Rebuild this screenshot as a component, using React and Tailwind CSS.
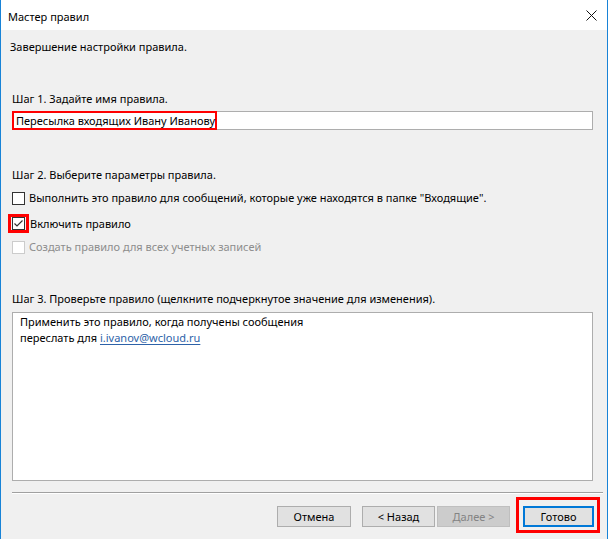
import React from 'react';

const font = { fontFamily: '"Noto Sans", "Liberation Sans", sans-serif' };

const Check = ({ checked, disabled }) => (
  <span
    className={`flex h-[13px] w-[13px] shrink-0 items-center justify-center border bg-white ${
      disabled ? 'border-[#cccccc]' : 'border-[#333333]'
    }`}
  >
    {checked && (
      <svg width="11" height="11" viewBox="0 0 11 11">
        <path d="M1.5 5.5 L4 8 L9.5 2.5" fill="none" stroke="#333" strokeWidth="1.2" />
      </svg>
    )}
  </span>
);

const Button = ({ children, disabled, primary, className = '' }) => (
  <button
    type="button"
    className={`flex h-[21px] items-center justify-center text-[11px] leading-none ${className} ${
      disabled
        ? 'border border-[#bfbfbf] bg-[#cccccc] text-[#838383]'
        : primary
        ? 'border-2 border-[#0078d7] bg-[#e1e1e1] text-black'
        : 'border border-[#adadad] bg-[#e1e1e1] text-black'
    }`}
  >
    {children}
  </button>
);

export default function App() {
  return (
    <div
      className="flex h-[539px] w-[608px] flex-col overflow-hidden border-x border-[#1883d7] bg-[#f0f0f0] text-[11px] text-black"
      style={font}
    >
      <div className="flex h-[30px] shrink-0 items-center justify-between bg-white pl-[7px] pr-[10px] pt-[4px]">
        <span className="text-[11px] leading-[16px]">Мастер правил</span>
        <svg width="11" height="11" viewBox="0 0 11 11" className="mb-[4px]">
          <path d="M0.5 0.5 L10.5 10.5 M10.5 0.5 L0.5 10.5" stroke="#111" strokeWidth="1" />
        </svg>
      </div>

      <div className="flex flex-col pl-[11px] pr-[13px]">
        <div className="ml-[-2px] mt-[9px] leading-[16px]">Завершение настройки правила.</div>

        <div className="mt-[36px] leading-[16px]">Шаг 1. Задайте имя правила.</div>
        <div className="mr-[1px] mt-[4px] flex h-[19px] items-center border border-[#adadad] bg-white">
          <span className="ml-[-1px] flex h-[19px] items-center border-2 border-[#ff0000] pl-[2px] pr-0 leading-none">
            Пересылка входящих Ивану Иванову
          </span>
        </div>

        <div className="mt-[37px] leading-[16px]">Шаг 2. Выберите параметры правила.</div>
        <div className="mt-[7px] flex items-center gap-[4px] leading-[16px]">
          <Check />
          <span>Выполнить это правило для сообщений, которые уже находятся в папке "Входящие".</span>
        </div>
        <div className="mt-[8px] flex items-center leading-[16px]">
          <span className="ml-[-4px] mr-[1px] flex h-[19px] w-[21px] items-center justify-center border-[3px] border-[#ff0000]">
            <Check checked />
          </span>
          <span>Включить правило</span>
        </div>
        <div className="mt-[6px] flex items-center gap-[4px] leading-[16px] text-[#8d8d8d]">
          <Check disabled />
          <span>Создать правило для всех учетных записей</span>
        </div>

        <div className="mt-[36px] leading-[16px]">
          Шаг 3. Проверьте правило (щелкните подчеркнутое значение для изменения).
        </div>
        <div className="mr-[1px] mt-[5px] h-[169px] border border-[#adadad] bg-white px-[7px] pt-[1px] leading-[16px]">
          <div>Применить это правило, когда получены сообщения</div>
          <div>
            переслать для{' '}
            <span className="text-[#2d62a8] underline underline-offset-2">i.ivanov@wcloud.ru</span>
          </div>
        </div>

        <div className="mr-[-9px] mt-[11px] h-[2px] border-t border-[#a0a0a0] bg-white" />

        <div className="mt-[12px] flex items-center justify-end">
          <Button className="w-[74px]">Отмена</Button>
          <Button className="ml-[11px] w-[73px]">&lt; Назад</Button>
          <Button disabled className="ml-[2px] w-[73px]">Далее &gt;</Button>
          <div className="relative ml-[13px]">
            <Button primary className="w-[71px]">Готово</Button>
            <span className="pointer-events-none absolute -bottom-[6px] -left-[7px] -right-[6px] -top-[9px] border-[3px] border-[#ff0000]" />
          </div>
        </div>
      </div>
    </div>
  );
}
